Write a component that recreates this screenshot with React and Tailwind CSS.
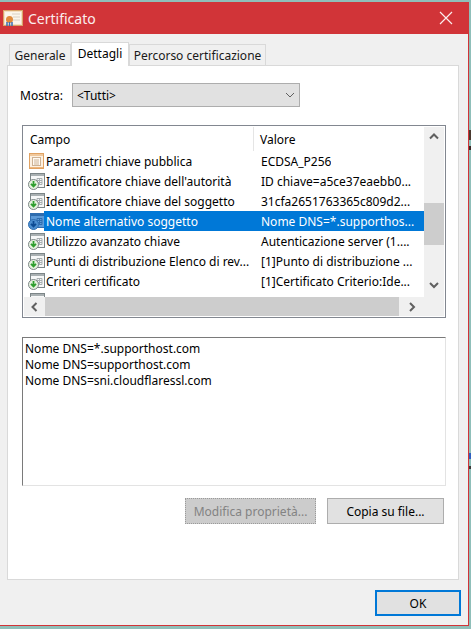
import React from "react";

function CertIcon() {
  return (
    <svg width="20" height="16" viewBox="0 0 20 16" className="shrink-0">
      <rect x="0.5" y="0.5" width="19" height="15" fill="#f3dfc2" stroke="#d9a56a" />
      <rect x="2" y="2" width="16" height="12" fill="#fbf5ea" />
      <path d="M9 4h8M10 7h7M10 10h7" stroke="#d8d0c4" strokeWidth="1" />
      <circle cx="6.5" cy="9.5" r="3.5" fill="#e08a3c" />
      <path d="M4 12v4M6.5 12v4M9 12v4" stroke="#3a6fb5" strokeWidth="1.5" />
    </svg>
  );
}

function PlainFieldIcon() {
  return (
    <svg width="15" height="16" viewBox="0 0 15 16" className="shrink-0">
      <rect x="0.5" y="0.5" width="14" height="15" fill="#fdf1e2" stroke="#e0a263" />
      <rect x="1" y="1" width="13" height="2" fill="#f0c89c" />
      <rect x="3.5" y="4.5" width="8" height="8" fill="#fffaf3" stroke="#cdb294" />
      <path d="M5 7h5M5 9h5M5 11h5" stroke="#cdb294" />
      <path d="M1 14.5h13" stroke="#eeb67c" />
    </svg>
  );
}

function DownFieldIcon({ selected }) {
  const frame = selected ? "#2f6db0" : "#7c8587";
  const fill = selected ? "#5c9ad8" : "#f7f8f8";
  const line = selected ? "#2e6cae" : "#a9b0b2";
  const disc = selected ? "#4d8fd0" : "#e6f2df";
  const arrow = selected ? "#0d4b94" : "#2f9e2f";
  return (
    <svg width="17" height="17" viewBox="0 0 17 17" className="shrink-0">
      <rect x="2.5" y="0.5" width="14" height="14" fill={fill} stroke={frame} />
      <rect x="3" y="1" width="13" height="2" fill={line} />
      <path d="M9 5.5h5v6h-5zM9 7.5h5M9 9.5h5M11.5 5.5v6" fill="none" stroke={line} />
      <circle cx="5.5" cy="11.5" r="5" fill={disc} stroke={frame} />
      <path d="M5.5 8v5M3 10.8l2.5 2.7 2.5-2.7" fill="none" stroke={arrow} strokeWidth="1.8" />
    </svg>
  );
}

function Chevron({ dir, thin = false }) {
  const d = {
    up: "M1 6.5 L5 2.5 L9 6.5",
    down: "M1 3 L5 7 L9 3",
    left: "M6.5 1 L2.5 5 L6.5 9",
    right: "M3 1 L7 5 L3 9",
  }[dir];
  return (
    <svg width="10" height="10" viewBox="0 0 10 10" className="shrink-0">
      <path d={d} fill="none" stroke="#606060" strokeWidth={thin ? 1 : 2} />
    </svg>
  );
}

const rows = [
  ["plain", "Parametri chiave pubblica", "ECDSA_P256"],
  ["down", "Identificatore chiave dell'autorità", "ID chiave=a5ce37eaebb0..."],
  ["down", "Identificatore chiave del soggetto", "31cfa2651763365c809d2..."],
  ["sel", "Nome alternativo soggetto", "Nome DNS=*.supporthos..."],
  ["down", "Utilizzo avanzato chiave", "Autenticazione server (1...."],
  ["down", "Punti di distribuzione Elenco di rev...", "[1]Punto di distribuzione ..."],
  ["down", "Criteri certificato", "[1]Certificato Criterio:Ide..."],
  ["down", "", ""],
];

function Row({ kind, field, value }) {
  const sel = kind === "sel";
  return (
    <div className="flex h-[20px] shrink-0 items-center">
      <div className={`flex w-[20px] shrink-0 items-center ${kind === "plain" ? "pl-[5px]" : "pl-[4px]"}`}>
        {kind === "plain" ? <PlainFieldIcon /> : <DownFieldIcon selected={sel} />}
      </div>
      <div className={`flex h-full min-w-0 flex-1 items-center whitespace-nowrap pt-[2px] ${sel ? "bg-[#0078d7] text-white" : "text-black"}`}>
        <span className="w-[215px] shrink-0 overflow-hidden pl-[2px]">{field}</span>
        <span className="overflow-hidden pl-[2px]">{value}</span>
      </div>
    </div>
  );
}

export default function App() {
  return (
    <div className="relative h-[629px] w-[471px] overflow-hidden bg-[#8fbfb9] pt-[2px] text-[12px] leading-[16px] text-black [font-family:'Noto_Sans','Open_Sans',sans-serif]">
      {/* Bits of the page behind the dialog */}
      <div className="absolute left-[469px] top-[130px] h-[10px] w-[2px] bg-[#4a3a30]" />
      <div className="absolute left-[469px] top-[146px] h-[4px] w-[2px] bg-[#3a2a28]" />
      <div className="absolute left-[469px] top-[453px] h-[6px] w-[2px] bg-[#2f5fc0]" />
      <div className="absolute left-[469px] top-[466px] h-[3px] w-[2px] bg-[#3a3a3a]" />

      <div className="flex h-[624px] w-[469px] flex-col border-r border-b border-[#d13438] bg-[#f0f0f0]">
        {/* Title bar */}
        <div className="flex h-[32px] shrink-0 items-center bg-[#d13438] pl-[3px] pr-[15px] text-white">
          <CertIcon />
          <span className="ml-[5px] pt-[2px] text-[14px] text-[#fbeeee]">Certificato</span>
          <svg width="14" height="14" viewBox="0 0 14 14" className="ml-auto">
            <path d="M1 1 L13 13 M13 1 L1 13" stroke="#fbeeee" strokeWidth="1.2" />
          </svg>
        </div>

        {/* Tabs */}
        <div className="ml-[9px] mt-[7px] flex h-[24px] shrink-0 items-end">
          <div className="flex h-[21px] w-[62px] items-center justify-center border border-b-0 border-[#d9d9d9] pt-[2px] text-[#1a1a1a]">Generale</div>
          <div className="relative z-10 -mb-px flex h-[24px] w-[58px] items-start justify-center border border-b-0 border-[#d9d9d9] bg-white pt-[3px]">Dettagli</div>
          <div className="flex h-[21px] w-[137px] items-center justify-center border border-b-0 border-[#d9d9d9] pt-[2px] text-[#1a1a1a]">Percorso certificazione</div>
        </div>

        {/* Panel */}
        <div className="ml-[7px] flex h-[515px] w-[452px] flex-col border border-[#d9d9d9] bg-white pl-[14px] pr-[12px]">
          <div className="-ml-[2px] mt-[17px] flex h-[24px] shrink-0 items-center">
            <span className="w-[52px] pt-[2px]">Mostra:</span>
            <div className="flex h-[24px] w-[228px] items-center justify-between border border-[#adadad] bg-[#e1e1e1] pl-[4px] pr-[4px]">
              <span className="pt-[2px]">&lt;Tutti&gt;</span>
              <Chevron dir="down" thin />
            </div>
          </div>

          {/* List */}
          <div className="mt-[18px] flex h-[193px] w-[424px] shrink-0 flex-col overflow-hidden border border-[#828790] p-px">
            <div className="flex min-h-0 flex-1">
              <div className="flex min-w-0 flex-1 flex-col overflow-hidden bg-white">
                <div className="flex h-[24px] shrink-0 items-center">
                  <span className="h-[24px] w-[230px] border-r border-[#e5e5e5] pl-[6px] pt-[1px] leading-[24px]">Campo</span>
                  <span className="pl-[6px] pt-[2px]">Valore</span>
                </div>
                {rows.map((r, i) => (
                  <Row key={i} kind={r[0]} field={r[1]} value={r[2]} />
                ))}
              </div>
              <div className="flex w-[20px] shrink-0 flex-col bg-[#f0f0f0]">
                <div className="flex h-[20px] shrink-0 items-center justify-center"><Chevron dir="up" /></div>
                <div className="mt-[56px] h-[42px] shrink-0 bg-[#cdcdcd]" />
                <div className="mt-auto flex h-[24px] items-center justify-center"><Chevron dir="down" /></div>
              </div>
            </div>
            <div className="flex h-[19px] shrink-0 bg-[#f0f0f0]">
              <div className="flex w-[21px] items-center justify-center"><Chevron dir="left" /></div>
              <div className="w-[354px] bg-[#cdcdcd]" />
              <div className="flex w-[25px] items-center justify-center"><Chevron dir="right" /></div>
            </div>
          </div>

          {/* Detail */}
          <div className="mt-[19px] h-[149px] w-[424px] shrink-0 border border-[#e3e3e3] border-l-[#7a7a7a] border-t-[#7a7a7a] pl-[2px] pt-[3px]">
            <div>Nome DNS=*.supporthost.com</div>
            <div>Nome DNS=supporthost.com</div>
            <div>Nome DNS=sni.cloudflaressl.com</div>
          </div>

          {/* Buttons */}
          <div className="mt-[12px] flex shrink-0 justify-end gap-[11px] pr-[2px]">
            <div className="flex h-[26px] w-[131px] items-center justify-center border border-dotted border-[#9a9a9a] bg-[#cccccc] pt-[2px] text-[#838383]">Modifica proprietà...</div>
            <div className="flex h-[26px] w-[117px] items-center justify-center border border-[#adadad] bg-[#e1e1e1] pt-[2px]">Copia su file...</div>
          </div>
        </div>

        {/* Footer */}
        <div className="flex flex-1 items-start justify-end pr-[7px] pt-[10px]">
          <div className="flex h-[26px] w-[86px] items-center justify-center border-2 border-[#0078d7] bg-[#e1e1e1] pt-[2px]">OK</div>
        </div>
      </div>
    </div>
  );
}
